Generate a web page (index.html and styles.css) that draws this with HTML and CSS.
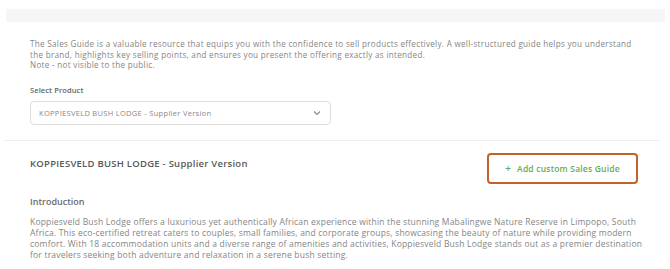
FILE: index.html
```html
<!DOCTYPE html>
<html>
<head>
<meta charset="utf-8">
<link rel="stylesheet" href="styles.css">
</head>
<body>
<div class="topbar"></div>
<section class="intro-section">
  <p class="lead">The Sales Guide is a valuable resource that equips you with the confidence to sell products effectively. A well-structured guide helps you understand the brand, highlights key selling points, and ensures you present the offering exactly as intended.<br>Note - not visible to the public.</p>
  <label class="field-label">Select Product</label>
  <div class="select">
    <span>KOPPIESVELD BUSH LODGE - Supplier Version</span>
    <svg class="chev" width="8" height="6" viewBox="0 0 8 6"><path d="M1 1.5 L4 4.5 L7 1.5" fill="none" stroke="#888" stroke-width="1.1"/></svg>
  </div>
</section>
<div class="divider"></div>
<section class="guide">
  <div class="guide-head">
    <h2 class="guide-title">KOPPIESVELD BUSH LODGE - Supplier Version</h2>
    <button class="add-btn"><span class="plus">+</span>Add custom Sales Guide</button>
  </div>
  <h3 class="sub">Introduction</h3>
  <p class="body-text">Koppiesveld Bush Lodge offers a luxurious yet authentically African experience within the stunning Mabalingwe Nature Reserve in Limpopo, South<br>Africa. This eco-certified retreat caters to couples, small families, and corporate groups, showcasing the beauty of nature while providing modern<br>comfort. With 18 accommodation units and a diverse range of amenities and activities, Koppiesveld Bush Lodge stands out as a premier destination<br>for travelers seeking both adventure and relaxation in a serene bush setting.</p>
</section>
</body>
</html>
```
FILE: styles.css
```css
* { box-sizing: border-box; }
body {
  margin: 0;
  background: #fff;
  font-family: "Open Sans", "Noto Sans", sans-serif;
  color: #858585;
}
.topbar {
  margin: 9px 5px 0 6px;
  height: 13px;
  background: #f6f6f6;
}
.intro-section {
  padding: 17px 30px 0 30px;
}
.lead {
  margin: 0;
  font-size: 8.1px;
  letter-spacing: 0.3px;
  line-height: 10.5px;
  width: 606px;
}
.field-label {
  display: block;
  margin-top: 14px;
  font-size: 7.5px;
  font-weight: 600;
  letter-spacing: 0.1px;
  color: #666;
  line-height: 10px;
}
.select {
  margin-top: 6px;
  width: 301px;
  height: 24px;
  border: 1px solid #ddd;
  border-radius: 4px;
  display: flex;
  align-items: center;
  justify-content: space-between;
  padding: 0 9px 0 8px;
  font-size: 7.5px;
  letter-spacing: 0.3px;
  color: #888;
}
.divider {
  margin: 15px 10px 0 5px;
  height: 1px;
  background: #eeeeee;
}
.guide {
  padding: 12px 30px 0 30px;
}
.guide-head {
  display: flex;
  justify-content: space-between;
  align-items: flex-start;
}
.guide-title {
  margin: 4px 0 0 0;
  font-size: 9.5px;
  font-weight: 600;
  letter-spacing: 0.25px;
  color: #585858;
}
.add-btn {
  margin-right: 2px;
  width: 151px;
  height: 31px;
  border: 2.5px solid #c0622a;
  border-radius: 4px;
  background: #fff;
  color: #6aab4c;
  font-family: inherit;
  font-size: 8.5px;
  font-weight: 600;
  letter-spacing: 0.2px;
  display: flex;
  align-items: center;
  justify-content: center;
  padding: 0;
}
.plus {
  margin-right: 6px;
  font-size: 10px;
}
.sub {
  margin: 11px 0 0 0;
  font-size: 9px;
  font-weight: 600;
  color: #6a6a6a;
}
.body-text {
  margin: 8px 0 0 0;
  font-size: 8.5px;
  letter-spacing: 0.2px;
  line-height: 11px;
  white-space: nowrap;
}
```
